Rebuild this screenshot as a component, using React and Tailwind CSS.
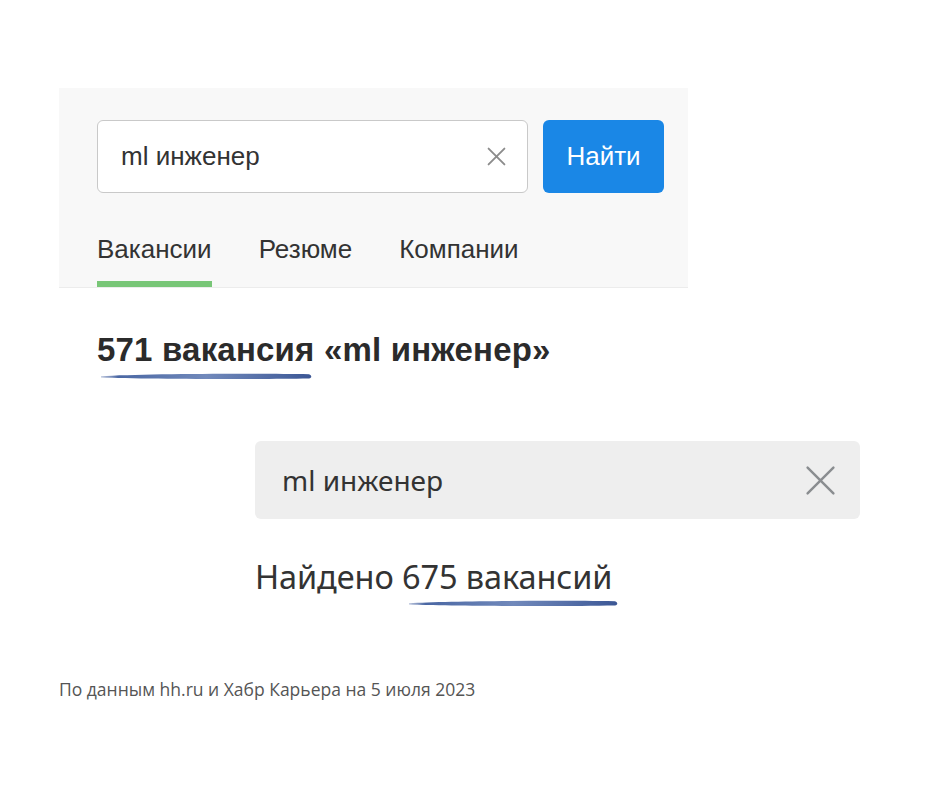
import React from 'react';

const Brush = ({ className }) => (
  <svg className={className} viewBox="0 0 212 8" preserveAspectRatio="none">
    <defs>
      <linearGradient id="brushFill" x1="0" x2="1" y1="0" y2="0">
        <stop offset="0" stopColor="#6f84b5" stopOpacity="0.5" />
        <stop offset="0.08" stopColor="#4a67a3" />
        <stop offset="0.5" stopColor="#7189bb" />
        <stop offset="0.9" stopColor="#47629e" />
        <stop offset="1" stopColor="#3b5694" />
      </linearGradient>
    </defs>
    <path d="M1 4.2 C 40 1.8, 150 1.2, 209 2.2 C 212 3, 212 6.2, 209 6.6 C 150 7.6, 40 7, 1 5.6 Z" fill="url(#brushFill)" />
  </svg>
);

const Cross = ({ className, strokeWidth }) => (
  <svg className={className} viewBox="0 0 24 24" fill="none" stroke="currentColor" strokeWidth={strokeWidth} strokeLinecap="round">
    <path d="M2 2 L22 22 M22 2 L2 22" />
  </svg>
);

const App = () => {
  return (
    <div className="min-h-[788px] w-[940px] bg-white pt-[88px]">
      <section className="ml-[59px] w-[629px] border-b border-[#ececec] bg-[#f8f8f8] pl-[38px] pr-[24px] pt-[32px] font-['Liberation_Sans',Arial,sans-serif]">
        <div className="flex gap-[15px]">
          <div className="flex h-[73px] w-[431px] items-center justify-between rounded-[6px] border border-[#c9c9c9] bg-white pl-[23px] pr-[21px]">
            <span className="text-[26px] text-[#333]">ml инженер</span>
            <Cross className="h-[19px] w-[19px] text-[#8c8c8c]" strokeWidth={2.4} />
          </div>
          <button type="button" className="h-[73px] w-[121px] rounded-[6px] bg-[#1a87e6] text-[26px] text-white">
            Найти
          </button>
        </div>
        <nav className="mt-[41px] flex gap-[47px] text-[26px] leading-[30px] text-[#333]">
          <div className="flex flex-col">
            <span>Вакансии</span>
            <span className="mt-[17px] h-[6px] bg-[#78c677]" />
          </div>
          <div className="flex flex-col">
            <span>Резюме</span>
            <span className="mt-[17px] h-[6px]" />
          </div>
          <div className="flex flex-col">
            <span>Компании</span>
            <span className="mt-[17px] h-[6px]" />
          </div>
        </nav>
      </section>

      <div className="ml-[97px] mt-[43px] font-['Liberation_Sans',Arial,sans-serif]">
        <h1 className="text-[33px] font-bold leading-[38px] tracking-[0.2px] text-[#2b2b2b]">571 вакансия «ml инженер»</h1>
        <Brush className="ml-[3px] mt-[3px] block h-[8px] w-[212px]" />
      </div>

      <div className="ml-[255px] mt-[61px] w-[605px] font-['Noto_Sans',sans-serif]">
        <div className="flex h-[78px] items-center justify-between rounded-[6px] bg-[#eeeeee] pl-[27px] pr-[24px]">
          <span className="text-[28px] text-[#333]">ml инженер</span>
          <Cross className="h-[31px] w-[31px] text-[#8a8d90]" strokeWidth={1.9} />
        </div>
        <p className="mt-[38px] text-[32.5px] leading-[40px] tracking-[-0.1px] text-[#333]">Найдено 675 вакансий</p>
        <Brush className="ml-[153px] mt-[2px] block h-[8px] w-[210px]" />
      </div>

      <p className="ml-[59px] mt-[69px] font-['Open_Sans',sans-serif] text-[17.5px] leading-[26px] text-[#555]">
        По данным hh.ru и Хабр Карьера на 5 июля 2023
      </p>
    </div>
  );
};

export default App;
